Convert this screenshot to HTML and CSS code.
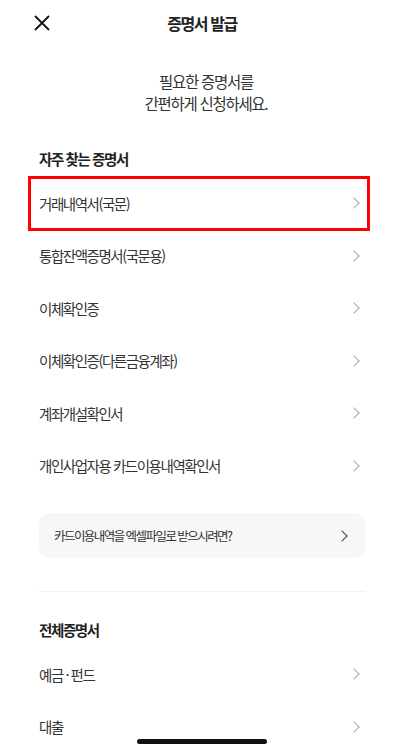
FILE: index.html
```html
<!DOCTYPE html>
<html lang="ko">
<head>
<meta charset="UTF-8" />
<meta name="viewport" content="width=device-width, initial-scale=1" />
<title>증명서 발급</title>
<link rel="stylesheet" href="styles.css">
</head>
<body>

<header class="topbar">
  <button class="close" aria-label="닫기">
    <svg width="16" height="16" viewBox="0 0 16 16"><path d="M1 1 L15 15 M15 1 L1 15" stroke="#111" stroke-width="1.8" fill="none"/></svg>
  </button>
  <h1>증명서 발급</h1>
</header>

<p class="intro">필요한 증명서를<br />간편하게 신청하세요.</p>

<section>
  <h2>자주 찾는 증명서</h2>
  <ul class="list">
    <li class="selected">거래내역서(국문)<span class="chev"></span></li>
    <li>통합잔액증명서(국문용)<span class="chev"></span></li>
    <li>이체확인증<span class="chev"></span></li>
    <li>이체확인증(다른금융계좌)<span class="chev"></span></li>
    <li>계좌개설확인서<span class="chev"></span></li>
    <li>개인사업자용 카드이용내역확인서<span class="chev"></span></li>
  </ul>

  <div class="card">카드이용내역을 엑셀파일로 받으시려면?<span class="chev dark"></span></div>
</section>

<hr class="divider" />

<section>
  <h2>전체증명서</h2>
  <ul class="list">
    <li>예금 · 펀드<span class="chev"></span></li>
    <li>대출<span class="chev"></span></li>
  </ul>
</section>

<div class="home-bar"></div>

</body>
</html>
```

FILE: styles.css
```css
body { margin: 0; font-family: "Noto Sans CJK KR", "Noto Sans", sans-serif; color: #222; background: #fff; }

.topbar { position: relative; height: 46px; display: flex; align-items: center; justify-content: center; }
.topbar h1 { margin: 0 8px 0 0; font-size: 16px; font-weight: 700; letter-spacing: -1.4px; color: #222; }
.close { position: absolute; left: 34px; top: 15px; padding: 0; border: 0; background: none; width: 16px; height: 16px; }
.close svg { display: block; }

.intro { margin: 24px 0 0; text-align: center; font-size: 15.5px; line-height: 22px; letter-spacing: -1.3px; color: #333; }

section { padding: 0 47px 0 39px; }
section h2 { margin: 35px 0 0; height: 20px; line-height: 20px; font-size: 14.5px; font-weight: 700; letter-spacing: -1.4px; color: #222; }
.divider + section h2 { margin-top: 28px; }

.list { list-style: none; margin: 8px 0 0; padding: 0; }
.list li { position: relative; height: 52.5px; display: flex; align-items: center; justify-content: space-between; font-size: 14.5px; letter-spacing: -1.45px; color: #333; }
.list li.selected::after { content: ""; position: absolute; left: -11px; right: -5px; top: -1px; bottom: -1px; border: 3px solid #f00; }

.chev { width: 7px; height: 7px; border-top: 1px solid #aaa; border-right: 1px solid #aaa; transform: rotate(45deg); margin-right: 7px; }
.chev.dark { border-color: #444; border-width: 1.4px; margin-right: 4px; }

.card { margin-top: 21px; height: 45px; padding: 0 15px; border-radius: 10px; background: #f7f7f7; display: flex; align-items: center; justify-content: space-between; font-size: 12.5px; letter-spacing: -1.55px; color: #333; }

.divider { margin: 33px 47px 0 39px; border: 0; border-top: 1px solid #f2f2f2; }

.home-bar { position: fixed; left: 137px; bottom: 8px; width: 130px; height: 5px; border-radius: 3px; background: #111; }
```
